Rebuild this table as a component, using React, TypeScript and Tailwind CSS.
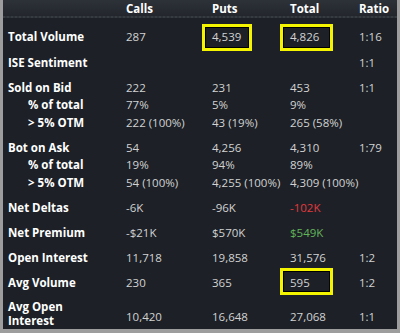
import React from 'react';

type Cell = {
  text: string;
  color?: string;
  box?: string;
};

type Line = {
  label: string;
  sub?: boolean;
  cells: Cell[];
};

const grid = 'grid grid-cols-[123px_86px_78px_69px_1fr]';
const font = { fontFamily: '"Open Sans", "DejaVu Sans", sans-serif' };

function ValueCell({ cell }: { cell: Cell }) {
  return (
    <div className="relative flex h-full items-center">
      {cell.box && (
        <span
          className={`absolute border-[3px] border-[#f4f400] shadow-[inset_0_0_0_1px_#000] ${cell.box}`}
        />
      )}
      <span className={`relative ${cell.color ?? 'text-[#d2d2d2]'}`}>{cell.text}</span>
    </div>
  );
}

function Row({ line, height }: { line: Line; height: string }) {
  return (
    <div className={`${grid} items-center ${height}`}>
      <div className={`font-bold text-white ${line.sub ? 'pl-[25px]' : 'pl-[5px]'}`}>
        {line.label}
      </div>
      {line.cells.map((c, i) => (
        <ValueCell key={i} cell={c} />
      ))}
    </div>
  );
}

function Group({ lines }: { lines: Line[] }) {
  return (
    <div className="flex h-[60px] flex-col justify-center">
      {lines.map((l) => (
        <Row key={l.label + l.cells[0].text} line={l} height="h-[17.5px]" />
      ))}
    </div>
  );
}

const c = (text: string, extra?: Partial<Cell>): Cell => ({ text, ...extra });

export default function App() {
  return (
    <div
      className="h-[333px] w-[400px] overflow-hidden border-b-[4px] border-l-[3px] border-r-[3px] border-[#9d9d9d] bg-[#1d2127] text-[11.5px] leading-[14px]"
      style={font}
    >
      {/* header */}
      <div
        className={`${grid} h-[18px] border-b-2 border-dotted border-[#363a41] bg-gradient-to-b from-[#2d3138] to-[#23272d] pt-[2px] font-bold text-white`}
      >
        <div />
        <div>Calls</div>
        <div>Puts</div>
        <div>Total</div>
        <div>Ratio</div>
      </div>
      <div className="h-[6px]" />

      <Row
        height="h-[26px]"
        line={{
          label: 'Total Volume',
          cells: [
            c('287'),
            c('4,539', { box: '-left-[10px] top-0 h-[27px] w-[50px]' }),
            c('4,826', { box: '-left-[10px] top-0 h-[27px] w-[53px]' }),
            c('1:16'),
          ],
        }}
      />
      <Row
        height="h-[25px]"
        line={{ label: 'ISE Sentiment', cells: [c(''), c(''), c(''), c('1:1')] }}
      />

      <Group
        lines={[
          { label: 'Sold on Bid', cells: [c('222'), c('231'), c('453'), c('1:1')] },
          { label: '% of total', sub: true, cells: [c('77%'), c('5%'), c('9%'), c('')] },
          {
            label: '> 5% OTM',
            sub: true,
            cells: [c('222 (100%)'), c('43 (19%)'), c('265 (58%)'), c('')],
          },
        ]}
      />
      <Group
        lines={[
          { label: 'Bot on Ask', cells: [c('54'), c('4,256'), c('4,310'), c('1:79')] },
          { label: '% of total', sub: true, cells: [c('19%'), c('94%'), c('89%'), c('')] },
          {
            label: '> 5% OTM',
            sub: true,
            cells: [c('54 (100%)'), c('4,255 (100%)'), c('4,309 (100%)'), c('')],
          },
        ]}
      />

      <Row
        height="h-[25px]"
        line={{
          label: 'Net Deltas',
          cells: [c('-6K'), c('-96K'), c('-102K', { color: 'text-[#e2393d]' }), c('')],
        }}
      />
      <Row
        height="h-[25px]"
        line={{
          label: 'Net Premium',
          cells: [c('-$21K'), c('$570K'), c('$549K', { color: 'text-[#62b45a]' }), c('')],
        }}
      />
      <Row
        height="h-[25px]"
        line={{
          label: 'Open Interest',
          cells: [c('11,718'), c('19,858'), c('31,576'), c('1:2')],
        }}
      />
      <Row
        height="h-[25px]"
        line={{
          label: 'Avg Volume',
          cells: [
            c('230'),
            c('365'),
            c('595', { box: '-left-[10px] -top-[2px] h-[27px] w-[53px]' }),
            c('1:2'),
          ],
        }}
      />

      {/* two-line label row */}
      <div className={`${grid} h-[34px] items-center`}>
        <div className="pl-[5px] pt-[4px] font-bold text-white">
          Avg Open
          <br />
          Interest
        </div>
        <div className="pt-[10px] text-[#d2d2d2]">10,420</div>
        <div className="pt-[10px] text-[#d2d2d2]">16,648</div>
        <div className="pt-[10px] text-[#d2d2d2]">27,068</div>
        <div className="pt-[10px] text-[#d2d2d2]">1:1</div>
      </div>
    </div>
  );
}
